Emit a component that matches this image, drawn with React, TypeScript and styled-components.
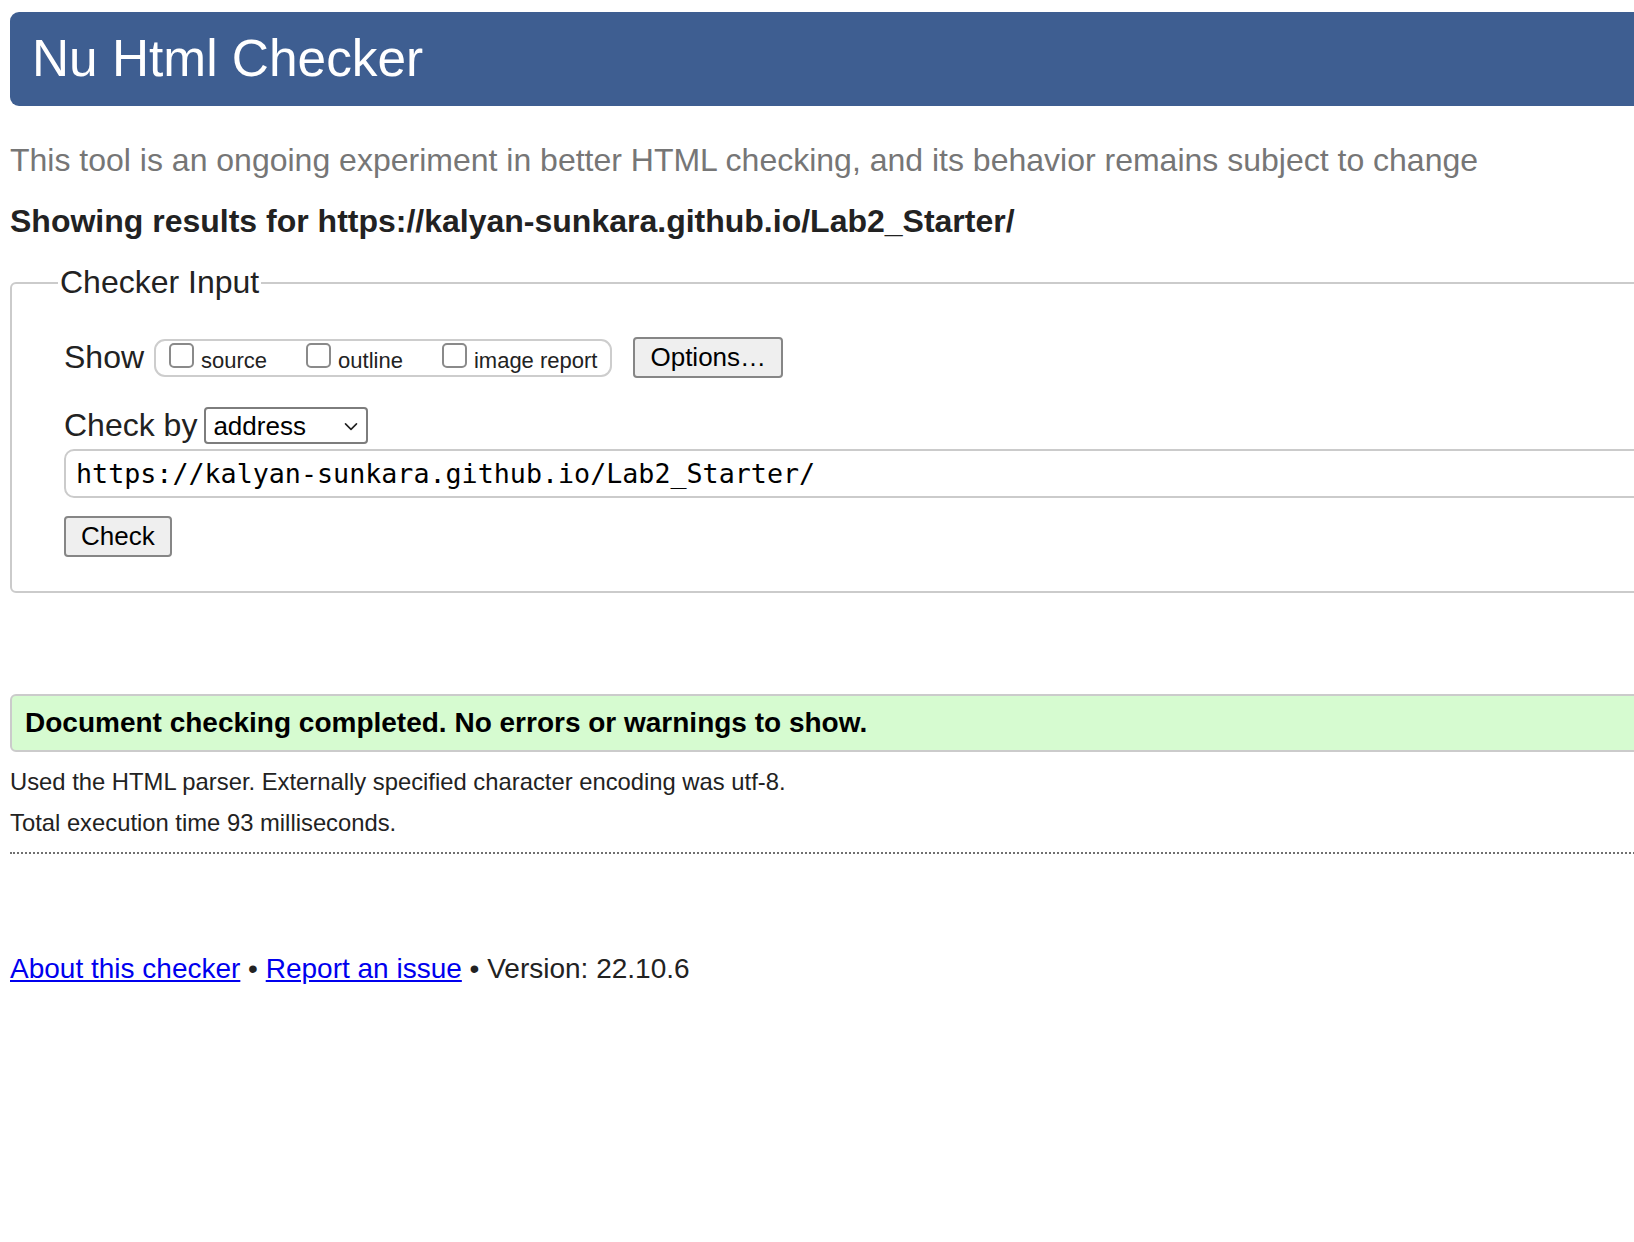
import React from "react";
import styled, { createGlobalStyle } from "styled-components";

const GlobalStyle = createGlobalStyle`
  html, body {
    margin: 0;
    padding: 0;
    background: #ffffff;
    overflow: hidden;
  }
  body {
    font-family: "Liberation Sans", Arial, Helvetica, sans-serif;
    color: #222222;
  }
`;

const Page = styled.div`
  width: 1790px;
  box-sizing: border-box;
  padding: 12px 0 0 10px;
  display: flex;
  flex-direction: column;
`;

const Header = styled.header`
  height: 94px;
  background: #3e5e91;
  border-radius: 9px;
  display: flex;
  align-items: center;
  padding-left: 22px;
`;

const Title = styled.h1`
  margin: 0;
  font-size: 51.4px;
  font-weight: 400;
  line-height: 1;
  color: #ffffff;
`;

const Tagline = styled.p`
  margin: 36px 0 0;
  font-size: 32px;
  line-height: 37px;
  color: #767676;
`;

const ResultsHeading = styled.h2`
  margin: 24px 0 0;
  font-size: 32px;
  line-height: 37px;
  font-weight: 700;
  color: #222222;
`;

const InputFieldset = styled.fieldset`
  margin: 24px 0 0;
  padding: 0 0 34px 52px;
  border: 2px solid #cbcbcb;
  border-radius: 6px;
  min-width: 0;
`;

const Legend = styled.legend`
  padding: 0 2px;
  margin-left: -6px;
  font-size: 32px;
  line-height: 37px;
  color: #222222;
`;

const FieldBody = styled.div`
  display: flex;
  flex-direction: column;
  align-items: flex-start;
  padding-top: 36px;
`;

const Row = styled.div<{ $gap: number; $top?: number }>`
  display: flex;
  align-items: center;
  gap: ${(p) => p.$gap}px;
  margin-top: ${(p) => p.$top ?? 0}px;
`;

const RowLabel = styled.span`
  font-size: 32px;
  line-height: 37px;
  color: #222222;
`;

const CheckGroup = styled.div`
  display: inline-flex;
  align-items: center;
  box-sizing: border-box;
  height: 38px;
  border: 2px solid #cdcdcd;
  border-radius: 11px;
  padding: 0 13px;
  gap: 39px;
`;

const CheckItem = styled.label`
  display: flex;
  align-items: baseline;
  gap: 7px;
  font-size: 22px;
  line-height: 25px;
  color: #222222;
`;

const Checkbox = styled.input`
  appearance: none;
  -webkit-appearance: none;
  width: 25px;
  height: 25px;
  margin: 0;
  box-sizing: border-box;
  border: 2px solid #8a8a8a;
  border-radius: 5px;
  background: #ffffff;
`;

const Button = styled.button<{ $left?: number; $top?: number }>`
  height: 41px;
  box-sizing: border-box;
  padding: 0 15px;
  margin-left: ${(p) => p.$left ?? 0}px;
  margin-top: ${(p) => p.$top ?? 0}px;
  font-family: "Liberation Sans", Arial, sans-serif;
  font-size: 26px;
  color: #000000;
  background: #efefef;
  border: 2px solid #868686;
  border-radius: 4px;
`;

const SelectWrap = styled.div`
  position: relative;
  display: inline-flex;
`;

const Select = styled.select`
  appearance: none;
  -webkit-appearance: none;
  width: 164px;
  height: 37px;
  box-sizing: border-box;
  padding: 0 0 0 7px;
  font-family: "Liberation Sans", Arial, sans-serif;
  font-size: 26px;
  color: #000000;
  background: #ffffff;
  border: 2px solid #7d7d7d;
  border-radius: 4px;
`;

const Chevron = styled.svg`
  position: absolute;
  right: 10px;
  top: 50%;
  transform: translateY(-40%);
  pointer-events: none;
`;

const UrlInput = styled.input`
  margin-top: 5px;
  width: 100%;
  height: 49px;
  box-sizing: border-box;
  padding: 0 10px;
  font-family: "DejaVu Sans Mono", "Liberation Mono", monospace;
  font-size: 26.7px;
  color: #000000;
  background: #ffffff;
  border: 2px solid #cbcbcb;
  border-radius: 10px;
`;

const Success = styled.div`
  margin-top: 101px;
  height: 58px;
  box-sizing: border-box;
  display: flex;
  align-items: center;
  padding-left: 13px;
  background: #d6fbd0;
  border: 2px solid #cbcbcb;
  border-radius: 6px;
  font-size: 28px;
  font-weight: 700;
  color: #000000;
`;

const Info = styled.p<{ $top: number }>`
  margin: ${(p) => p.$top}px 0 0;
  font-size: 23.8px;
  line-height: 27px;
  color: #222222;
`;

const Divider = styled.hr`
  margin: 16px 0 0;
  border: 0;
  border-top: 2px dotted #707070;
  height: 0;
`;

const Footer = styled.footer`
  margin-top: 99px;
  font-size: 28px;
  line-height: 32px;
  color: #222222;
`;

const FooterLink = styled.a`
  color: #0000ee;
  text-decoration: underline;
`;

const url = "https://kalyan-sunkara.github.io/Lab2_Starter/";

export default function App() {
  return (
    <>
      <GlobalStyle />
      <Page>
        <Header>
          <Title>Nu Html Checker</Title>
        </Header>
        <Tagline>
          This tool is an ongoing experiment in better HTML checking, and its behavior remains subject to change
        </Tagline>
        <ResultsHeading>Showing results for {url}</ResultsHeading>

        <InputFieldset>
          <Legend>Checker Input</Legend>
          <FieldBody>
            <Row $gap={10}>
              <RowLabel>Show</RowLabel>
              <CheckGroup>
                <CheckItem>
                  <Checkbox type="checkbox" />
                  source
                </CheckItem>
                <CheckItem>
                  <Checkbox type="checkbox" />
                  outline
                </CheckItem>
                <CheckItem>
                  <Checkbox type="checkbox" />
                  image report
                </CheckItem>
              </CheckGroup>
              <Button type="button" $left={11}>
                Options…
              </Button>
            </Row>
            <Row $gap={7} $top={29}>
              <RowLabel>Check by</RowLabel>
              <SelectWrap>
                <Select defaultValue="address">
                  <option value="address">address</option>
                  <option value="file">file upload</option>
                  <option value="text">text input</option>
                </Select>
                <Chevron width="14" height="9" viewBox="0 0 14 9">
                  <polyline
                    points="1.5,1.5 7,7 12.5,1.5"
                    fill="none"
                    stroke="#222"
                    strokeWidth="1.6"
                    strokeLinecap="round"
                    strokeLinejoin="round"
                  />
                </Chevron>
              </SelectWrap>
            </Row>
            <UrlInput type="url" defaultValue={url} />
            <Button type="submit" $top={18}>
              Check
            </Button>
          </FieldBody>
        </InputFieldset>

        <Success>Document checking completed. No errors or warnings to show.</Success>
        <Info $top={16}>Used the HTML parser. Externally specified character encoding was utf-8.</Info>
        <Info $top={14}>Total execution time 93 milliseconds.</Info>
        <Divider />

        <Footer>
          <FooterLink href="#about">About this checker</FooterLink> •{" "}
          <FooterLink href="#issue">Report an issue</FooterLink> • Version: 22.10.6
        </Footer>
      </Page>
    </>
  );
}
